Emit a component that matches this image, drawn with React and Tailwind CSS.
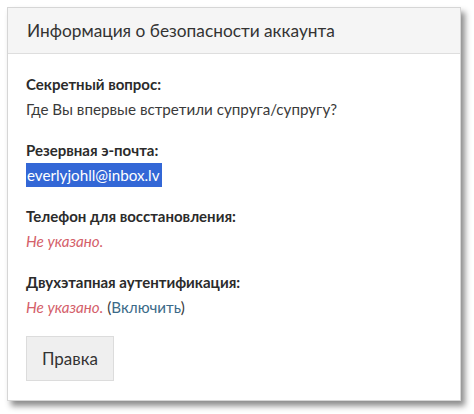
import React from 'react'

const rows = [
  { label: 'Секретный вопрос:', value: 'Где Вы впервые встретили супруга/супругу?' },
  { label: 'Резервная э-почта:', value: 'everlyjohll@inbox.lv', selected: true },
  { label: 'Телефон для восстановления:', missing: true },
  { label: 'Двухэтапная аутентификация:', missing: true, action: 'Включить' },
]

function InfoRow({ row }) {
  return (
    <div className="mb-[17px]">
      <div className="text-[15px] font-bold leading-[25px] text-[#2b2b2b]">{row.label}</div>
      <div className="text-[15.2px] leading-[24px] text-[#3a3a3a]">
        {row.selected && (
          <span className="bg-[#3367d6] text-white pl-[1px] pr-[2px] py-[3px]">{row.value}</span>
        )}
        {!row.selected && !row.missing && row.value}
        {row.missing && <span className="italic text-[#d4606a]">Не указано.</span>}
        {row.action && (
          <>
            {' '}
            (<a href="#" className="text-[#3b6a88]">{row.action}</a>)
          </>
        )}
      </div>
    </div>
  )
}

export default function App() {
  return (
    <div className="w-[474px] h-[414px] bg-white pt-[7px] pl-[7px]" style={{ fontFamily: 'Lato, "Open Sans", sans-serif' }}>
      <div className="w-[454px] h-[394px] bg-white border border-[#d6d6d6] shadow-[4px_5px_6px_rgba(0,0,0,0.45)]">
        <div className="h-[46px] bg-[#f5f5f5] border-b border-[#dedede] px-[19px] flex items-center">
          <h2 className="text-[17.3px] text-[#333]">Информация о безопасности аккаунта</h2>
        </div>
        <div className="px-[18px] pt-[18px]">
          {rows.map((row) => (
            <InfoRow key={row.label} row={row} />
          ))}
          <button className="mt-[0px] w-[88px] h-[45px] bg-[#efefef] border border-[#dcdcdc] text-[17px] text-[#333]">
            Правка
          </button>
        </div>
      </div>
    </div>
  )
}
